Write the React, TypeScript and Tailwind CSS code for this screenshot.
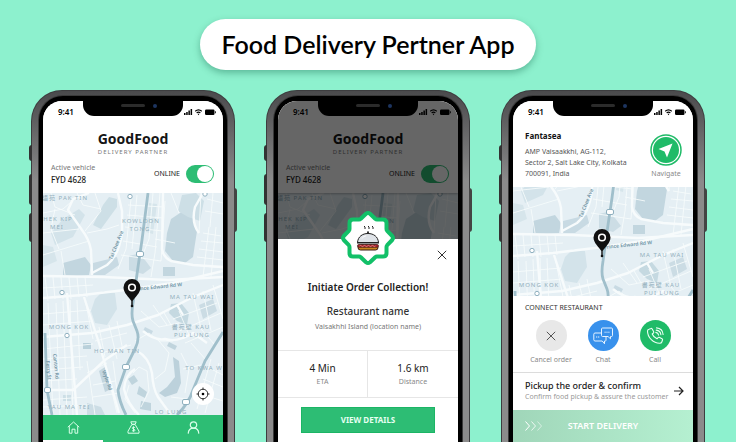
import type { ReactNode } from "react";

const shades: { d: string; fill: string }[] = [
  { d: "M128 26l12-8 10 6 4 14-4 26-8 6-12-2-8-10 2-18z", fill: "#c2d6df" },
  { d: "M139 2l14-2 8 8-4 20-12-4-10-6z", fill: "#cddfe6" },
  { d: "M20 70l22-6 6 8-2 10-26 2z", fill: "#c2d6df" },
  { d: "M50 70l24-6 2 8-14 10-12 0z", fill: "#c8dae3" },
  { d: "M66 4l8 2 0 8-16 22-8-4 10-20z", fill: "#cddfe6" },
  { d: "M20 26l16-10 6 6-12 22-18 8-4-12z", fill: "#d3e3ea" },
  { d: "M86 63l8-2 8 6 6 8-8 6-14-4z", fill: "#ccdde5" },
  { d: "M52 106l8-8 12 2 2 16-10 16-12-2-4-12z", fill: "#d3e3ea" },
  { d: "M120 74l12 0 0 9-12 0z", fill: "#c2d6df" },
  { d: "M128 111l10-1 8 10-2 12-10-4-8-8z", fill: "#c5d9e1" },
  { d: "M56 178l6-4 6 22-6 3z", fill: "#c3d6df" },
  { d: "M130 164l6 4 2 22-4 10-12 4-6-4 8-6 8-10z", fill: "#bcd1db" },
  { d: "M98 208l10 2 0 8-11-2z", fill: "#bfd4dd" },
  { d: "M96 193l8 6-2 6-8-4z", fill: "#bfd4dd" },
  { d: "M85 186l6-4 4 6-6 4z", fill: "#bfd4dd" },
  { d: "M40 150l8 0 0 6-8 0z", fill: "#b9d0da" },
  { d: "M20 202l8 0 0 6-8 0z", fill: "#cddfe6" },
  { d: "M44 210l14 4 4 8-18 0z", fill: "#ccdde5" },
  { d: "M156 112l14-6 4 12-14 8z", fill: "#cbdce4" },
  { d: "M126 149l8 4-2 4-8-4z", fill: "#c0d4dd" },
  { d: "M102 134l8 4-2 4-8-4z", fill: "#c8dae3" },
  { d: "M0 52l10 2 4 14-14 6z", fill: "#d6e5eb" },
  { d: "M106 10l8 1-4 30-7-2z", fill: "#d6e5eb" },
];

const minorRoads = [
  "M5 110l5 112M13 110l4 112M20 108l4 114M27 107l3 115M34 107l3 70M42 106l8 40M0 121l48-4M0 132l50-4M0 156l50-5M0 166l44-3M0 177l40-3M0 188l34-2M0 207l44-3M0 214l46-2",
  "M2 84l3 24M10 84l2 22M18 84l2 22M26 84l2 22M34 84l2 20M42 84l2 20M0 95l50-3",
  "M8 0l4 14 20 8M0 20l20-4 16-14M12 16l-4 20 8 20M0 40l36-4M0 62l46-14M18 58l4 24M52 0l6 18-16 20M34 0l6 12 18 4M44 40l20-4 12-4",
  "M110 0l-4 46-8 20M117 0l-5 60-4 24M88 6l-5 50-8 20M94 2l-5 54M82 34l38 4M84 22l36 3M80 48l34 6M85 12l36 2M78 62l40 6M112 46l20 4",
  "M160 40l18 3M158 48l22 2M156 56l24 3M154 64l26 3M152 72l28 3M166 34l-6 50M173 34l-5 50M158 0l-2 40M164 6l16 4M162 18l18 3M170 0l-3 34M128 0l8 20M122 8l-4 60",
  "M56 134l6 30M66 132l8 34M74 128l6 30M52 148l32-8M58 160l30-8M44 180l20-10M50 192l22-4M50 204l26-4M44 168l8 54M62 170l12 50M70 168l4 30",
  "M98 118l18 16 20-4M110 112l14 20M92 148l14-8 10 8 14 0M136 118l10 24 14 4M120 118l8 14M150 100l8 36 14 16M160 98l8 40M170 92l10 34M130 126l44-16M136 138l42-18M142 150l38-16",
  "M90 180l6-6 8 4 2 20-8 16M86 192l-4 14 10 14M116 148l10 12-4 18-10 8M138 160l8 16-4 24M148 150l16 18M140 176l18-4M128 204l16 2M164 174l16 8M160 186l20 8M154 200l26 8M168 166l-14 50M176 170l-14 50",
];

const mainRoads = [
  "M0 83L60 84L125 87L180 84",
  "M0 105L40 102L82 97L130 90L180 78",
  "M0 144L49 140L84 132L115 122L150 104L180 92",
  "M49 82L48 57Q46 46 39 37L25 17L30 6L46 0",
  "M49 80L64 72Q76 62 79 40L79 18L75 0",
  "M120 0L119 56Q120 64 128 68L150 72L180 74",
  "M41 104L56 150L76 220",
  "M30 197L62 167L84 152",
  "M94 158Q106 164 109 180Q110 196 115 204L128 222",
  "M92 176Q82 182 81 196Q84 210 96 222",
  "M134 112L140 122M100 138Q112 148 122 146Q134 150 150 140L164 150",
  "M156 40Q148 30 152 14L160 0",
  "M24 100L34 222M2 197L32 197",
];

const trunkRoads = [
  "M105 0L99 47L95 74L90 110Q88 122 90 128L94 138Q97 146 92 156L83 174L75 197Q76 208 83 222",
  "M180 139L162 168L150 197Q146 210 134 222",
  "M2 140L4 197L9 222",
];

const districts = [
  { x: 22, y: 7, text: "語苑 PAK TIN" },
  { x: 15, y: 28, text: "HEK KIP" },
  { x: 14, y: 36, text: "MEI" },
  { x: 98, y: 30, text: "KOWLOON" },
  { x: 97, y: 38, text: "TONG" },
  { x: 149, y: 106, text: "MA TAU WAI" },
  { x: 26, y: 136, text: "MONG KOK" },
  { x: 148, y: 136, text: "書宛壁 KAU" },
  { x: 149, y: 144, text: "PUI LUNG" },
  { x: 74, y: 160, text: "HO MAN TIN" },
  { x: 161, y: 177, text: "TO KWA W" },
  { x: 26, y: 216, text: "YAU MA TEI" },
  { x: 128, y: 221, text: "LO LUNG" },
];

const streets = [
  { x: 91, y: 98, angle: -6, text: "Prince Edward Rd W" },
  { x: 69, y: 67, angle: -68, text: "Tai Chee Ave" },
  { x: 59, y: 178, angle: 70, text: "Wylie Rd" },
  { x: 10, y: 161, angle: 84, text: "Canton Rd" },
  { x: 3, y: 168, angle: 84, text: "Ferry St" },
];

function CityMap({ top, height, pin }: { top: number; height: number; pin?: number }) {
  const inView = (item: { y: number }) => item.y > top + 4 && item.y < top + height;
  return (
    <svg viewBox={`0 ${top} 180 ${height}`} preserveAspectRatio="xMidYMin slice" className="block h-full w-full" role="img" aria-label="City map">
      <rect x="-40" width="280" height="240" fill="#e5eff4" />
      {shades.map((s) => <path key={s.d} d={s.d} fill={s.fill} />)}
      <g fill="none" stroke="#f7fbfc" strokeLinejoin="round">
        {minorRoads.map((d) => <path key={d} d={d} strokeWidth="1" opacity=".85" />)}
        {mainRoads.map((d) => <path key={d} d={d} strokeWidth="2.4" />)}
      </g>
      <g fill="none" stroke="#a0bfcb" strokeWidth="2.8" strokeLinejoin="round">
        {trunkRoads.map((d) => <path key={d} d={d} />)}
      </g>
      <g fill="#fff" stroke="#8fb0bf" strokeWidth="1">
        <rect x="93.500" y="58.500" width="7" height="5" rx="1.500" />
        <rect x="79.500" y="171.500" width="7" height="5" rx="1.500" />
        <rect x="1.500" y="194.500" width="6" height="5" rx="1.500" />
        <rect x="139.500" y="206.500" width="7" height="5" rx="1.500" />
        <circle cx="87" cy="3.500" r="2.200" />
        <circle cx="162" cy="1" r="2.200" />
        <circle cx="19" cy="99.500" r="2.200" />
        <circle cx="24" cy="142.500" r="2.200" />
      </g>
      <g fill="#94b0bd" textAnchor="middle" className="font-['Noto_Sans','Noto_Sans_CJK_TC',sans-serif] text-[6px] tracking-[1px]">
        {districts.filter(inView).map((l) => <text key={l.text} x={l.x} y={l.y}>{l.text}</text>)}
      </g>
      <g fill="#6f93a4" className="font-['Noto_Sans',sans-serif] text-[5px] font-semibold">
        {streets.filter(inView).map((s) => (
          <text key={s.text} transform={`translate(${s.x} ${s.y}) rotate(${s.angle})`}>{s.text}</text>
        ))}
      </g>
      {pin !== undefined && (
        <g transform={`translate(89 ${pin})`}>
          <path d="M0 -27a8.500 8.500 0 0 1 8.500 8.500C8.500 -13 3 -9 .7 -5V0h-1.400V-5C-3 -9 -8.500 -13 -8.500 -18.500A8.500 8.500 0 0 1 0 -27z" fill="#111" />
          <circle cy="-18.500" r="3.300" fill="#111" stroke="#fff" strokeWidth="1.600" />
          <circle cy="0" r="1.300" fill="#111" />
        </g>
      )}
    </svg>
  );
}

function StatusBar() {
  return (
    <div className="flex h-[22px] items-center justify-between pr-[6px] pl-[15px] text-[8px] font-semibold text-black">
      <span>9:41</span>
      <svg width="34" height="8" viewBox="0 0 34 8" aria-hidden="true">
        <path d="M1 5h1.500v2H1zM3.200 4h1.500v3H3.200zM5.400 2.600h1.500V7H5.400zM7.600 1h1.500v6H7.600z" />
        <path d="M12.200 3.200a5.200 5.200 0 0 1 6.600 0M13.600 4.900a3 3 0 0 1 3.800 0" fill="none" stroke="#000" strokeWidth="1.100" />
        <path d="M14.500 5.800h2l-1 1.400z" />
        <rect x="22" y="1.500" width="9.500" height="5.500" rx="1.200" />
        <path d="M32 3.200h.8v2H32z" />
      </svg>
    </div>
  );
}

function Phone({ label, children }: { label: string; children: ReactNode }) {
  return (
    <section aria-label={label} className="relative flex w-[204px] flex-col rounded-t-[31px] bg-[#3d3d3f] px-px pt-px">
      <span className="absolute top-[55px] -left-[2px] h-4 w-[3px] rounded-l bg-[#333]" />
      <span className="absolute top-[84px] -left-[2px] h-[31px] w-[3px] rounded-l bg-[#333]" />
      <span className="absolute top-[123px] -left-[2px] h-[29px] w-[3px] rounded-l bg-[#333]" />
      <span className="absolute top-[98px] -right-[2px] h-[44px] w-[3px] rounded-r bg-[#444]" />
      <div className="flex flex-1 flex-col rounded-t-[30px] bg-linear-to-b from-[#4a4a4c] to-[#8b8b8b] to-[90px] px-[6px] pt-1">
        <div className="flex flex-1 flex-col rounded-t-[25px] bg-[#3a3a3a] px-px pt-px">
          <div className="relative flex flex-1 flex-col rounded-t-[24px] bg-black px-1 pt-[5px]">
            <div className="absolute top-[5px] left-1/2 z-10 flex h-[15px] w-[100px] -translate-x-1/2 justify-center rounded-b-[11px] bg-black">
              <span className="mt-[3px] h-[3px] w-6 rounded-full bg-[#2b2b2b]" />
              <span className="absolute top-[3px] right-[26px] size-1 rounded-full bg-[#1d3560]" />
            </div>
            <div className="flex flex-1 flex-col overflow-hidden rounded-t-[19px] bg-white">{children}</div>
          </div>
        </div>
      </div>
    </section>
  );
}

function PartnerHeader({ id }: { id: string }) {
  return (
    <header className="relative bg-white shadow-[0_1px_2px_rgba(0,0,0,0.25)]">
      <StatusBar />
      <h2 className="mt-2 text-center text-[14px] leading-4 font-bold text-[#151515]">GoodFood</h2>
      <p className="mt-px text-center text-[6px] leading-2 tracking-[1px] text-[#777]">DELIVERY PARTNER</p>
      <div className="mt-[6px] flex items-center justify-between pr-[9px] pb-[7px] pl-2">
        <div>
          <p className="text-[7px] leading-3 text-[#777]">Active vehicle</p>
          <p className="text-[8px] leading-3 font-medium text-[#222]">FYD 4628</p>
        </div>
        <label htmlFor={id} className="flex items-center gap-[6px] text-[7px] text-[#222]">
          ONLINE
          <input
            id={id}
            type="checkbox"
            defaultChecked
            className="flex h-[18px] w-7 appearance-none items-center justify-start rounded-full bg-[#2dbd74] p-px before:size-4 before:rounded-full before:bg-white checked:justify-end"
          />
        </label>
      </div>
    </header>
  );
}

function HomeScreen() {
  return (
    <Phone label="Home">
      <PartnerHeader id="online-home" />
      <div className="relative min-h-[222px] flex-1">
        <div className="absolute inset-0"><CityMap top={0} height={222} pin={113} /></div>
        <button aria-label="My location" className="absolute right-[9px] bottom-[10px] grid size-[22px] place-items-center rounded-full bg-white">
          <svg width="14" height="14" viewBox="0 0 14 14" fill="none" stroke="#333">
            <circle cx="7" cy="7" r="4.800" />
            <path d="M7 .5v2.500M7 11v2.500M.5 7H3M11 7h2.500" />
            <circle cx="7" cy="7" r="1.300" fill="#000" stroke="none" />
          </svg>
        </button>
      </div>
      <nav className="grid h-[27px] grid-cols-3 bg-[#2dbd74]">
        <a href="#home" aria-label="Home" className="grid place-items-center border-b-2 border-white">
          <svg width="13" height="13" viewBox="0 0 13 13" fill="none" stroke="#d9ffe9" strokeLinejoin="round">
            <path d="M.8 6.200L6.500 1l5.700 5.200M2.300 5.200v7h2.700V8.200h3v4h2.700v-7" />
          </svg>
        </a>
        <a href="#earnings" aria-label="Earnings" className="grid place-items-center border-b-2 border-transparent">
          <svg width="13" height="13" viewBox="0 0 13 13" fill="none" stroke="#d9ffe9" strokeLinejoin="round">
            <path d="M4.800 3.200L3.800.8h5.400l-1 2.400zM4.800 3.600h3.400L12 10.200v2H1v-2zM6.500 5.400v5.200M8 6.800c-1-1-3-.6-2.800.4S8 8 8 9.200s-2.200 1.200-3 .2" />
          </svg>
        </a>
        <a href="#profile" aria-label="Profile" className="grid place-items-center border-b-2 border-transparent">
          <svg width="13" height="13" viewBox="0 0 13 13" fill="none" stroke="#d9ffe9" strokeWidth="1.200">
            <circle cx="6.500" cy="4" r="3.200" />
            <path d="M1.200 12.600C1.400 9 3.600 7.200 6.500 7.200s5.100 1.800 5.300 5.400" />
          </svg>
        </a>
      </nav>
    </Phone>
  );
}

function BurgerBadge() {
  return (
    <svg width="56" height="56" viewBox="0 0 56 56" aria-hidden="true">
      <path
        d="M26 3.800Q28 2.200 30 3.800L35.200 8.800Q36 9.500 37 9.500L43 9.500Q46.500 9.500 46.500 13L46.500 19Q46.500 20 47.200 20.800L52.200 26Q53.800 28 52.200 30L47.200 35.200Q46.500 36 46.500 37L46.500 43Q46.500 46.500 43 46.500L37 46.500Q36 46.500 35.200 47.200L30 52.200Q28 53.800 26 52.200L20.800 47.200Q20 46.500 19 46.500L13 46.500Q9.500 46.500 9.500 43L9.500 37Q9.500 36 8.800 35.200L3.800 30Q2.200 28 3.800 26L8.800 20.800Q9.500 20 9.500 19L9.500 13Q9.500 9.500 13 9.500L19 9.500Q20 9.500 20.800 8.800Z"
        fill="#fff" stroke="#12c068" strokeWidth="4" strokeLinejoin="round"
      />
      <path d="M24 16l1 1v2M28 16l1 1v2M32 16l1 1v2" fill="none" stroke="#222" />
      <circle cx="28" cy="22.300" r="1" fill="#222" />
      <path d="M17.500 32.500C18 26.500 22.500 23.500 28 23.500s10 3 10.500 9z" fill="#dfe3e8" stroke="#222" />
      <path d="M22 28.500c1-1.600 2.400-2.400 4.200-2.700" fill="none" stroke="#fff" />
      <path d="M17 32.800h22" stroke="#222" strokeWidth="1.200" />
      <rect x="18" y="35" width="20" height="5" rx="2.500" fill="#c9851f" stroke="#3a1a12" />
      <rect x="17.500" y="34.500" width="21" height="2.800" rx="1.400" fill="#a8202c" stroke="#3a1a12" strokeWidth=".7" />
      <path d="M19.500 36q1-1.200 2 0t2 0 2 0 2 0 2 0 2 0 2 0 2 0" fill="none" stroke="#f4a9a0" strokeWidth=".7" />
    </svg>
  );
}

function OrderScreen() {
  return (
    <Phone label="New order">
      <div className="relative overflow-hidden">
        <PartnerHeader id="online-order" />
        <div className="h-[46px]"><CityMap top={0} height={46} /></div>
        <div className="absolute inset-0 bg-black/60" />
      </div>
      <div role="dialog" aria-label="Initiate order collection" className="relative flex flex-1 flex-col bg-white text-center">
        <div className="-mt-[29px] flex justify-center"><BurgerBadge /></div>
        <button aria-label="Close" className="absolute top-[11px] right-[11px]">
          <svg width="10" height="10" viewBox="0 0 10 10" stroke="#333"><path d="M.8.8l8.400 8.400M9.200.8L.8 9.200" /></svg>
        </button>
        <h3 className="mt-[14px] text-[10px] leading-[14px] font-semibold text-[#222]">Initiate Order Collection!</h3>
        <p className="mt-[10px] text-[10px] leading-[14px] font-medium text-[#333]">Restaurant name</p>
        <p className="mt-1 text-[7px] leading-[10px] text-[#777]">Vaisakhhi Island (location name)</p>
        <dl className="mt-[18px] grid grid-cols-2 divide-x divide-[#e6e6e6] border-y border-[#e6e6e6]">
          <div className="flex flex-col-reverse gap-[2px] py-[10px]">
            <dt className="text-[7px] leading-[10px] text-[#888]">ETA</dt>
            <dd className="text-[10px] leading-[14px] text-[#222]">4 Min</dd>
          </div>
          <div className="flex flex-col-reverse gap-[2px] py-[10px]">
            <dt className="text-[7px] leading-[10px] text-[#888]">Distance</dt>
            <dd className="text-[10px] leading-[14px] text-[#222]">1.6 km</dd>
          </div>
        </dl>
        <button className="mx-[23px] mt-[9px] mb-[9px] h-[26px] border border-[#1bb565] bg-[#2dbd74] text-[8px] font-bold text-[#e6fff1]">VIEW DETAILS</button>
      </div>
    </Phone>
  );
}

function ContactAction({ label, color, children }: { label: string; color: string; children: ReactNode }) {
  return (
    <button className="flex flex-col items-center gap-1 text-[7px] leading-[10px] whitespace-nowrap text-[#888]">
      <span className={`grid size-[31px] place-items-center rounded-full ${color}`}>{children}</span>
      {label}
    </button>
  );
}

function PickupScreen() {
  return (
    <Phone label="Pickup">
      <header className="relative bg-white shadow-[0_1px_2px_rgba(0,0,0,0.25)]">
        <StatusBar />
        <div className="flex justify-between pt-[7px] pr-[11px] pb-2 pl-3">
          <div>
            <h2 className="text-[8px] leading-3 font-bold text-[#111]">Fantasea</h2>
            <address className="mt-1 text-[7px] leading-[11px] text-[#555] not-italic">
              AMP Vaisaakkhi, AG-112,<br />Sector 2, Salt Lake City, Kolkata<br />700091, India
            </address>
          </div>
          <a href="#navigate" className="flex w-8 flex-col items-center gap-[3px] pt-1 text-[7px] leading-[10px] text-[#888]">
            <svg width="32" height="32" viewBox="0 0 32 32" aria-hidden="true">
              <circle cx="16" cy="16" r="15" fill="#fff" stroke="#1fbb68" strokeWidth="1.500" />
              <circle cx="16" cy="16" r="13" fill="#1fbb68" />
              <path d="M22.500 9.500L8.500 15l6 2.500 2.500 6z" fill="#fff" />
            </svg>
            Navigate
          </a>
        </div>
      </header>
      <div className="relative min-h-[109px] flex-1">
        <div className="absolute inset-0"><CityMap top={36} height={109} pin={105} /></div>
      </div>
      <div className="relative bg-white px-3 pt-[7px] pb-[7px]">
        <h3 className="text-[7px] leading-[10px] text-[#333]">CONNECT RESTAURANT</h3>
        <div className="mt-[7px] grid grid-cols-3">
          <ContactAction label="Cancel order" color="bg-[#e8e8e8]">
            <svg width="10" height="10" viewBox="0 0 10 10" stroke="#555"><path d="M.8.8l8.400 8.400M9.200.8L.8 9.200" /></svg>
          </ContactAction>
          <ContactAction label="Chat" color="bg-[#3891ec]">
            <svg width="20" height="18" viewBox="0 0 20 18" fill="none" stroke="#e6f3ff" strokeLinejoin="round">
              <path d="M9.500 1h9c.6 0 1 .4 1 1v6.500c0 .6-.4 1-1 1h-1v2.300l-2.500-2.300H9.500c-.6 0-1-.4-1-1V2c0-.6.4-1 1-1z" />
              <path d="M8.500 6H2C1.300 6 .8 6.500.8 7.200v5.600c0 .7.500 1.200 1.200 1.200h7.200l2.300 2.800V14h.8c.4 0 .7-.3.700-.7V9.500" />
              <path d="M11.500 5.200h5M3 10h4" strokeDasharray="1.200 .7" />
            </svg>
          </ContactAction>
          <ContactAction label="Call" color="bg-[#1fbb68]">
            <svg width="18" height="18" viewBox="0 0 18 18" fill="none" stroke="#eafff3" strokeWidth="1.100" strokeLinejoin="round" strokeLinecap="round">
              <path d="M3 2.200L5 1.500c.5-.2 1 0 1.200.5l1.500 2.800c.2.500.1.900-.3 1.200L6.200 7c.8 2 2.600 3.800 4.800 4.800l1-1.200c.3-.4.700-.5 1.200-.3l2.800 1.500c.5.200.7.700.5 1.200l-.7 2c-.3.800-1 1.200-1.800 1.200C7.500 16.500 1.500 10.500 1.500 4c0-.8.500-1.500 1.500-1.800z" />
              <path d="M9.800 5.400c1.400.2 2.600 1.400 2.800 2.800M10.200 3.100c2.500.3 4.400 2.200 4.700 4.700M10.500.9c3.600.3 6.300 3 6.600 6.600" />
            </svg>
          </ContactAction>
        </div>
      </div>
      <button className="flex items-center justify-between border-t border-[#dcdcdc] bg-white pt-[7px] pr-[9px] pb-2 pl-3 text-left">
        <span>
          <span className="block text-[9px] leading-3 font-medium text-[#222]">Pickup the order &amp; confirm</span>
          <span className="block text-[7px] leading-[10px] text-[#999]">Confirm food pickup &amp; assure the customer</span>
        </span>
        <svg width="10" height="10" viewBox="0 0 10 10" fill="none" stroke="#222" strokeWidth="1.200" className="shrink-0" aria-hidden="true"><path d="M0 5h9M5 1l4 4-4 4" /></svg>
      </button>
      <button className="grid h-8 grid-cols-[1fr_auto_1fr] items-center bg-linear-to-r from-[#a0d6b9] to-[#b5f0d1] px-3 text-[9px] font-semibold text-white">
        <svg width="18" height="10" viewBox="0 0 18 10" fill="none" stroke="#fff" aria-hidden="true">
          <path d="M.5.5L4.500 5l-4 4.500" /><path d="M6.500.5l4 4.500-4 4.500" opacity=".8" /><path d="M12.500.5l4 4.500-4 4.500" opacity=".55" />
        </svg>
        START DELIVERY
      </button>
    </Phone>
  );
}

export default function App() {
  return (
    <main className="flex min-h-screen flex-col items-center bg-[#8df1ce] pt-[19px] font-['Noto_Sans','Open_Sans',sans-serif]">
      <h1 className="flex h-[51px] items-center rounded-full bg-white px-[21px] font-['Lato',sans-serif] text-[25px] font-semibold text-black shadow-[0_3px_7px_rgba(0,80,55,0.35)]">
        Food Delivery Pertner App
      </h1>
      <div className="mt-5 flex flex-1 justify-center gap-[31px]">
        <HomeScreen />
        <OrderScreen />
        <PickupScreen />
      </div>
    </main>
  );
}
